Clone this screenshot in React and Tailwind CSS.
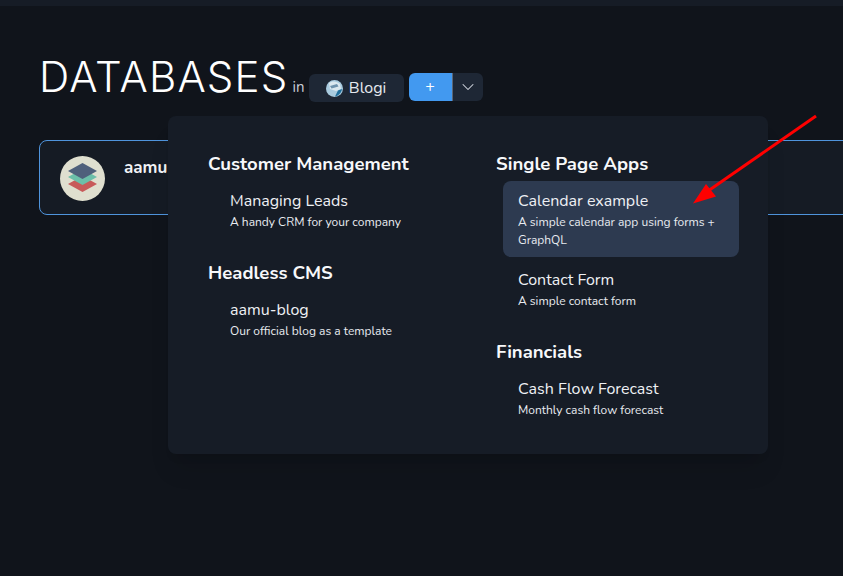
import React from 'react';
import { ChevronDown } from 'lucide-react';

const TemplateItem = ({ title, description, active, indent }) => (
  <div className={`rounded-lg py-[8px] ${indent} ${active ? 'bg-[#2d3a50]' : ''}`}>
    <div className="text-[16px] leading-[24px] text-[#eef0f4]">{title}</div>
    <div className="text-[12px] leading-[18px] text-[#e8ebf0]">{description}</div>
  </div>
);

const GroupTitle = ({ children }) => (
  <h3 className="text-[18.5px] leading-[28px] font-bold text-[#f7f8fa]">{children}</h3>
);

const LayersLogo = () => (
  <svg width="45" height="45" viewBox="0 0 45 45" className="shrink-0">
    <circle cx="22.500" cy="22.500" r="22.500" fill="#dfdfcf" />
    <path d="M22.500 20 L37 28 L22.500 36 L8 28 Z" fill="#c85a5a" />
    <path d="M22.500 13 L37 21 L22.500 29 L8 21 Z" fill="#6cbfa9" />
    <path d="M22.500 7 L37 15 L22.500 23 L8 15 Z" fill="#4f607b" />
  </svg>
);

const GlobeIcon = () => (
  <svg width="17" height="17" viewBox="0 0 17 17">
    <circle cx="8.500" cy="8.500" r="8.500" fill="#a9cbdf" />
    <path d="M3 3 C6 0.500 11 1 14 4 L15 9 L10 11 L4 9 Z" fill="#dbe8ef" />
    <path d="M4 6 L11 4 L12.500 6.500 L5.500 8.500 Z" fill="#6f93ad" />
    <path d="M9 16.500 C12 16 15.500 13 16 9 L12 10.500 Z" fill="#1f6f9c" />
  </svg>
);

export default function App() {
  return (
    <div className="relative h-[576px] w-[843px] overflow-hidden bg-[#10141b] font-['Nunito','Noto_Sans',sans-serif]">
      <div className="h-[6px] bg-[#161c26]" />

      <div className="pl-[39px] pt-[43px]">
        <div className="flex items-end">
          <h1 className="font-['Inter',sans-serif] font-light text-[42px] leading-[56px] tracking-[1.2px] text-white">DATABASES</h1>
          <span className="ml-[4px] mb-[7px] text-[15px] leading-[22px] text-[#c9ced6]">in</span>
          <div className="ml-[4px] mb-[3px] flex h-[28px] w-[95px] items-center justify-center gap-[6px] rounded-md bg-[#1e2735] text-[16px] text-[#e5e9ef]">
            <GlobeIcon />
            <span>Blogi</span>
          </div>
          <div className="ml-[5px] mb-[4px] flex h-[28px]">
            <div className="flex w-[43px] items-center justify-center rounded-l-md bg-[#4299f0] text-[16px] text-white">+</div>
            <div className="flex w-[31px] items-center justify-center rounded-r-md border-l border-[#5b6675] bg-[#1e2735] text-[#d5dae2]">
              <ChevronDown size={20} strokeWidth={1.25} />
            </div>
          </div>
        </div>

        <div className="mt-[35px] flex h-[75px] w-[900px] rounded-lg border border-[#4f94dc] bg-[#151b24] pl-[20px] pt-[15px]">
          <LayersLogo />
          <div className="ml-[19px] text-[17px] leading-[24px] font-bold text-[#f2f4f7]">aamu</div>
        </div>
      </div>

      <div className="absolute left-[168px] top-[116px] flex h-[338px] w-[600px] rounded-lg bg-[#161c26] pt-[34px] shadow-xl">
        <div className="w-[328px] pl-[40px]">
          <GroupTitle>Customer Management</GroupTitle>
          <div className="mt-[3px]">
            <TemplateItem indent="pl-[22px]" title="Managing Leads" description="A handy CRM for your company" />
          </div>
          <div className="mt-[20px]"><GroupTitle>Headless CMS</GroupTitle></div>
          <div className="mt-[3px]">
            <TemplateItem indent="pl-[22px]" title="aamu-blog" description="Our official blog as a template" />
          </div>
        </div>
        <div className="w-[243px]">
          <GroupTitle>Single Page Apps</GroupTitle>
          <div className="ml-[7px] mt-[3px]">
            <TemplateItem active indent="px-[15px]" title="Calendar example" description="A simple calendar app using forms + GraphQL" />
            <div className="mt-[3px]">
              <TemplateItem indent="px-[15px]" title="Contact Form" description="A simple contact form" />
            </div>
          </div>
          <div className="mt-[20px]"><GroupTitle>Financials</GroupTitle></div>
          <div className="ml-[7px] mt-[3px]">
            <TemplateItem indent="px-[15px]" title="Cash Flow Forecast" description="Monthly cash flow forecast" />
          </div>
        </div>
      </div>

      {/* annotation arrow */}
      <svg className="absolute left-0 top-0" width="843" height="576" viewBox="0 0 843 576">
        <path d="M816 116 L708 191" stroke="#ff0000" strokeWidth="3" fill="none" />
        <path d="M693 203.500 L706 184 L716 196.500 Z" fill="#ff0000" />
      </svg>
    </div>
  );
}
